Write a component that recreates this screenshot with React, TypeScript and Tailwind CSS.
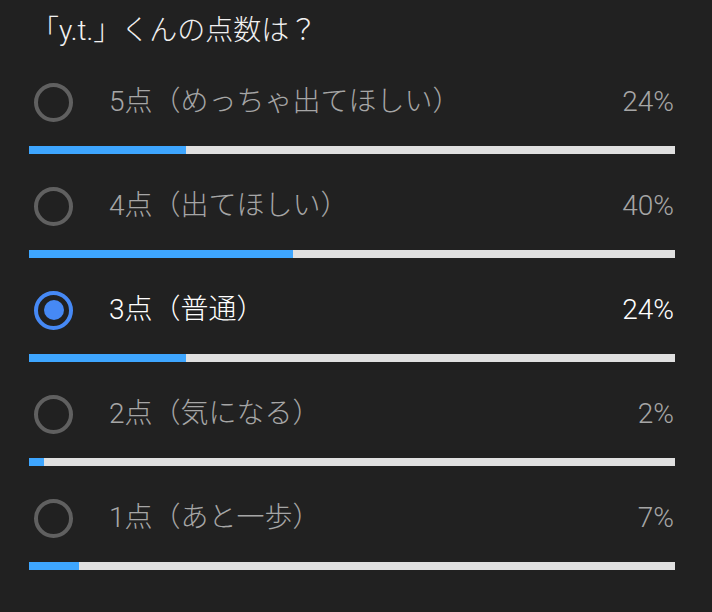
const options = [
  { label: '5点（めっちゃ出てほしい）', pct: 24, bar: 24.3 },
  { label: '4点（出てほしい）', pct: 40, bar: 40.9 },
  { label: '3点（普通）', pct: 24, bar: 24.3, selected: true },
  { label: '2点（気になる）', pct: 2, bar: 2.3 },
  { label: '1点（あと一歩）', pct: 7, bar: 7.7 },
]

function Radio({ selected }: { selected?: boolean }) {
  if (selected) {
    return (
      <div className="ml-[5px] flex h-[39px] w-[39px] shrink-0 items-center justify-center rounded-full border-[4px] border-[#4689f5]">
        <div className="h-[20px] w-[20px] rounded-full bg-[#4689f5]" />
      </div>
    )
  }
  return <div className="ml-[5px] h-[39px] w-[39px] shrink-0 rounded-full border-[4px] border-[#606060]" />
}

export default function App() {
  return (
    <div
      className="h-[612px] w-[712px] bg-[#212121] pl-[29px] pr-[37px]"
      style={{ fontFamily: 'Roboto, "Noto Sans CJK JP", sans-serif' }}
    >
      <div className="h-[74px] pl-[2px] pt-[13px] text-[28px] font-light leading-[36px] text-[#f1f1f1]">
        「y.t.」くんの点数は？
      </div>
      {options.map((o) => (
        <div key={o.label} className="h-[104px]">
          <div className="flex h-14 items-center">
            <Radio selected={o.selected} />
            <span
              className={
                'ml-[36px] flex-1 text-[28px] font-light leading-[36px] ' +
                (o.selected ? 'text-white' : 'text-[#a6a6a6]')
              }
            >
              {o.label}
            </span>
            <span
              className={
                'pr-px text-[28px] font-light leading-[36px] ' +
                (o.selected ? 'text-white' : 'text-[#a6a6a6]')
              }
            >
              {o.pct}%
            </span>
          </div>
          <div className="mt-4 flex h-2 w-[646px] bg-[#e0e0e0]">
            <div className="h-full bg-[#3ea6ff]" style={{ width: `${o.bar}%` }} />
          </div>
        </div>
      ))}
    </div>
  )
}
